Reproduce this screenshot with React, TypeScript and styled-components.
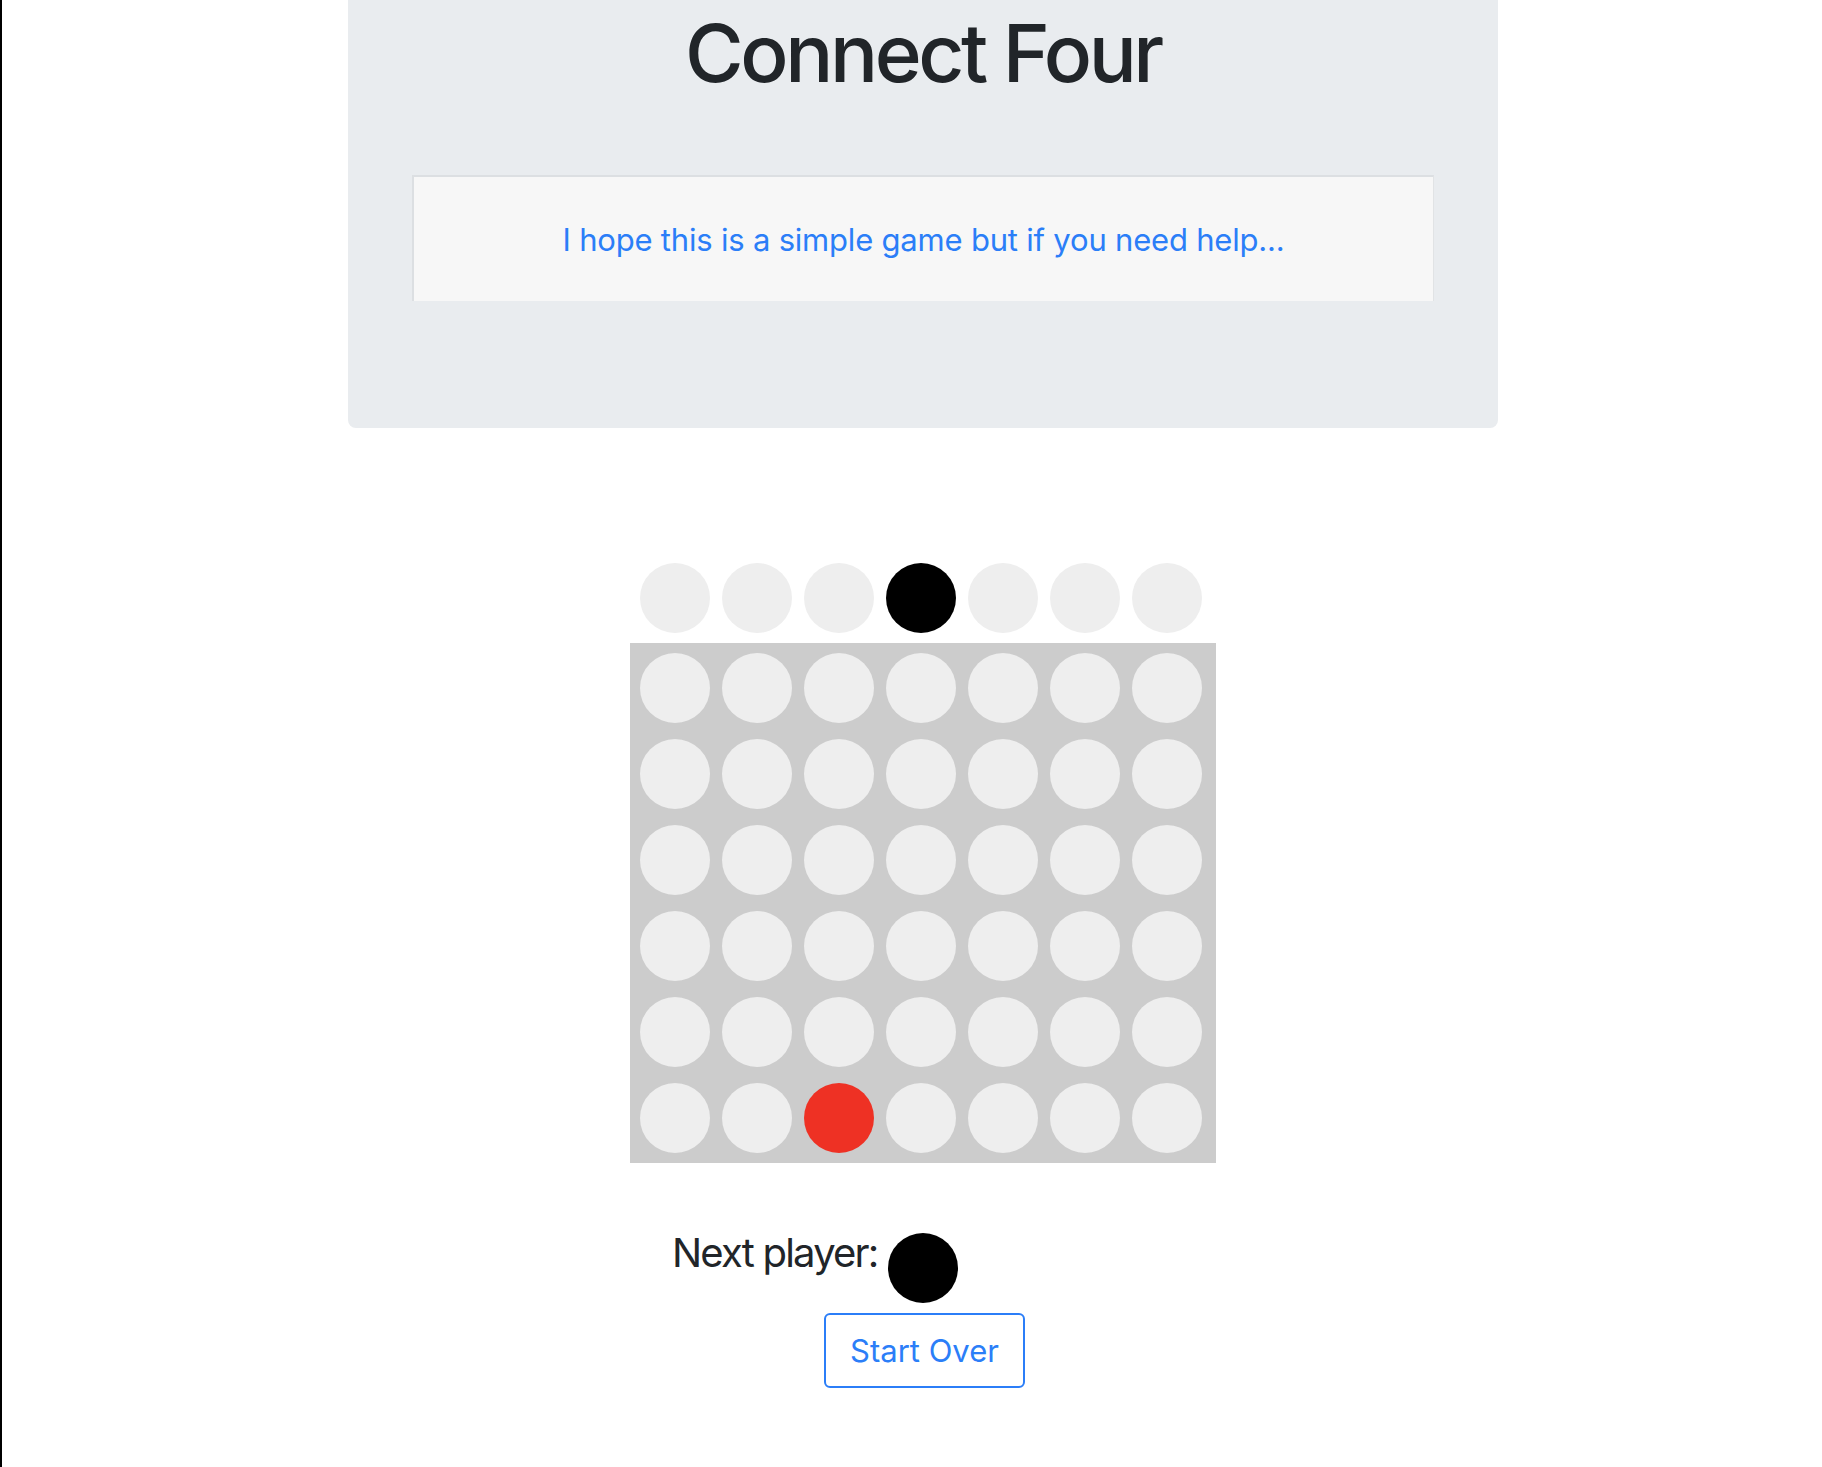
import React from "react";
import styled, { createGlobalStyle } from "styled-components";

const GlobalStyle = createGlobalStyle`
  html, body {
    margin: 0;
    padding: 0;
    background: #ffffff;
  }
  body {
    font-family: Inter, "Noto Sans", "Liberation Sans", sans-serif;
    color: #212529;
    border-left: 2px solid #000000;
    min-height: 1467px;
    box-sizing: border-box;
  }
`;

const Page = styled.div`
  padding-left: 22px;
  display: flex;
  flex-direction: column;
  align-items: center;
`;

const Jumbotron = styled.header`
  width: 1150px;
  box-sizing: border-box;
  background: #e9ecef;
  border-radius: 0 0 8px 8px;
  padding: 5px 64px 127px;
  display: flex;
  flex-direction: column;
`;

const Title = styled.h1`
  margin: 0 0 74px;
  font-size: 80px;
  line-height: 96px;
  font-weight: 500;
  letter-spacing: -3.4px;
  text-align: center;
  color: #212529;
`;

const HelpBox = styled.div`
  background: #f7f7f7;
  border-top: 2px solid #dcdfe2;
  border-left: 2px solid #dcdfe2;
  border-right: 1px solid #e1e3e5;
  padding: 40px 0 38px;
  text-align: center;
`;

const HelpLink = styled.a`
  font-size: 31px;
  line-height: 46px;
  letter-spacing: -0.2px;
  color: #2b7ef8;
  text-decoration: none;
  cursor: pointer;
`;

const Game = styled.section`
  margin-top: 135px;
  display: flex;
  flex-direction: column;
  align-items: center;
`;

const Area = styled.div`
  width: 586px;
  box-sizing: border-box;
  padding: 0 14px 0 10px;
`;

const DropRow = styled.div`
  display: grid;
  grid-template-columns: repeat(7, 70px);
  column-gap: 12px;
  margin-bottom: 10px;
`;

const Board = styled.div`
  width: 586px;
  box-sizing: border-box;
  background: #cccccc;
  padding: 10px 14px 10px 10px;
  display: grid;
  grid-template-columns: repeat(7, 70px);
  column-gap: 12px;
  row-gap: 16px;
`;

type Piece = "empty" | "red" | "black";

const pieceColor: Record<Piece, string> = {
  empty: "#eeeeee",
  red: "#ee3124",
  black: "#000000",
};

const Disc = styled.div<{ $piece: Piece }>`
  width: 70px;
  height: 70px;
  border-radius: 50%;
  background: ${(p) => pieceColor[p.$piece]};
`;

const NextRow = styled.div`
  width: 586px;
  box-sizing: border-box;
  padding-left: 42px;
  margin-top: 66px;
  display: flex;
  align-items: flex-start;
  gap: 10px;
`;

const NextLabel = styled.h5`
  margin: 0;
  font-size: 40px;
  line-height: 48px;
  font-weight: 400;
  letter-spacing: -1.8px;
  color: #212529;
`;

const NextDisc = styled(Disc)`
  margin-top: 3.5px;
`;

const StartButton = styled.button`
  margin-top: 10px;
  margin-left: 3px;
  font-family: inherit;
  font-size: 31px;
  line-height: 46px;
  padding: 13px 24px 12px;
  color: #2b7ef8;
  background: transparent;
  border: 2px solid #2b7ef8;
  border-radius: 6px;
  cursor: pointer;
`;

const ROWS = 6;
const COLS = 7;

export default function App() {
  const board: Piece[][] = Array.from({ length: ROWS }, () =>
    Array.from({ length: COLS }, () => "empty" as Piece)
  );
  board[5][2] = "red";
  const hoverCol = 3;

  return (
    <>
      <GlobalStyle />
      <Page>
        <Jumbotron>
          <Title>Connect Four</Title>
          <HelpBox>
            <HelpLink>I hope this is a simple game but if you need help...</HelpLink>
          </HelpBox>
        </Jumbotron>
        <Game>
          <Area>
            <DropRow>
              {Array.from({ length: COLS }, (_, c) => (
                <Disc key={c} $piece={c === hoverCol ? "black" : "empty"} />
              ))}
            </DropRow>
          </Area>
          <Board>
            {board.flatMap((row, r) =>
              row.map((cell, c) => <Disc key={`${r}-${c}`} $piece={cell} />)
            )}
          </Board>
          <NextRow>
            <NextLabel>Next player:</NextLabel>
            <NextDisc $piece="black" />
          </NextRow>
          <StartButton>Start Over</StartButton>
        </Game>
      </Page>
    </>
  );
}
